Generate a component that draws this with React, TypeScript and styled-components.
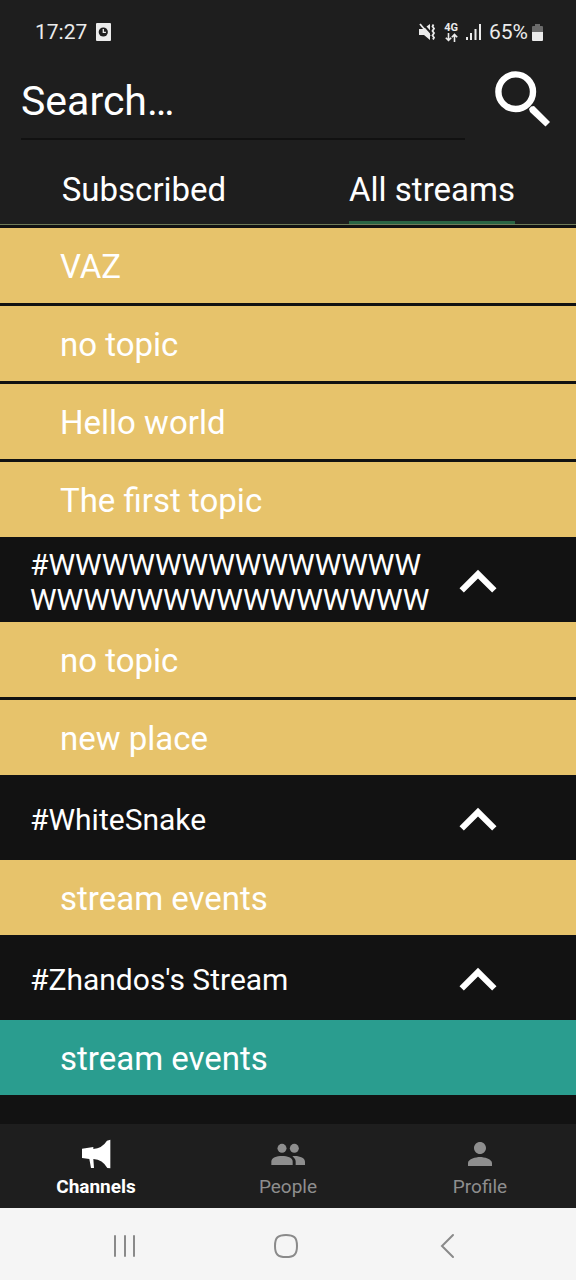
import React from "react";
import styled, { createGlobalStyle, css } from "styled-components";
import { MdKeyboardArrowUp, MdPerson } from "react-icons/md";

const GlobalStyle = createGlobalStyle`
  *, *::before, *::after { box-sizing: border-box; }
  body {
    margin: 0;
    background: #121212;
    color: #fff;
    font-family: Roboto, "Liberation Sans", sans-serif;
  }
  button, input {
    margin: 0;
    padding: 0;
    border: 0;
    border-radius: 0;
    background: none;
    color: inherit;
    font: inherit;
  }
  svg { display: block; }
`;

const Screen = styled.div`
  display: flex;
  flex-direction: column;
  min-height: 100vh;
`;

const TopPanel = styled.header`
  background: #1e1e1e;
  border-bottom: 1px solid #6f7b58;
`;

const StatusBar = styled.div`
  display: flex;
  align-items: center;
  justify-content: space-between;
  height: 64px;
  padding: 0 33px 0 35px;
  color: #ebebeb;
  font-size: 21px;
  line-height: 24px;
`;

const StatusGroup = styled.div<{ $gap: number }>`
  display: flex;
  align-items: center;
  gap: ${({ $gap }) => $gap}px;
`;

const BatteryGroup = styled.div`
  display: flex;
  align-items: center;
  gap: 4px;
`;

const NetworkBadge = styled.span`
  display: flex;
  flex-direction: column;
  align-items: center;
  font-size: 11px;
  font-weight: 700;
  line-height: 10px;
`;

const SearchRow = styled.form`
  display: flex;
  align-items: flex-start;
  gap: 30px;
  padding: 0 26px 0 21px;
`;

const SearchInput = styled.input`
  flex: 1;
  min-width: 0;
  height: 76px;
  border-bottom: 2px solid #111;
  font-size: 41px;
  line-height: 48px;
  outline: none;

  &::placeholder {
    color: #fff;
    opacity: 1;
  }
`;

const IconButton = styled.button`
  display: flex;
  flex: none;
  align-items: center;
  justify-content: center;
  cursor: pointer;
`;

const SearchButton = styled(IconButton)`
  height: 70px;
`;

const Tabs = styled.div`
  display: grid;
  grid-template-columns: 1fr 1fr;
  height: 84px;
`;

const Tab = styled.button`
  display: flex;
  justify-content: center;
  font-size: 33px;
  line-height: 40px;
  cursor: pointer;
`;

const TabLabel = styled.span<{ $active: boolean }>`
  height: 84px;
  padding-top: 30px;
  border-bottom: 3px solid ${({ $active }) => ($active ? "#2a6544" : "transparent")};
`;

const StreamList = styled.main`
  flex: 1;
  padding: 3px 0 29px;
`;

const StreamHeading = styled.h2`
  display: flex;
  align-items: center;
  min-height: 85px;
  margin: 0;
  padding: 4px 59px 0 30px;
  font-size: 30px;
  font-weight: 400;
  line-height: 35px;
`;

const StreamName = styled.span`
  flex: 1;
  min-width: 0;
  word-break: break-all;
`;

const ToggleButton = styled(IconButton)`
  width: 78px;
  height: 78px;
`;

const TopicList = styled.ul`
  display: flex;
  flex-direction: column;
  gap: 3px;
  margin: 0;
  padding: 0;
  list-style: none;
`;

const TopicButton = styled.button<{ $color: string }>`
  display: block;
  width: 100%;
  height: 75px;
  padding: 3px 60px 0;
  background: ${({ $color }) => $color};
  font-size: 33px;
  line-height: 40px;
  text-align: left;
  cursor: pointer;
`;

const BottomTabs = styled.nav`
  display: grid;
  grid-template-columns: repeat(3, 1fr);
  height: 84px;
  background: #1e1e1e;
`;

const BottomTab = styled.a<{ $active?: boolean }>`
  display: flex;
  flex-direction: column;
  align-items: center;
  gap: 4px;
  padding-top: 12px;
  color: #8e8e8e;
  font-size: 19px;
  line-height: 22px;
  text-decoration: none;

  ${({ $active }) =>
    $active &&
    css`
      color: #fff;
      font-weight: 700;
    `}
`;

const SystemBar = styled.div`
  display: flex;
  align-items: center;
  justify-content: space-between;
  height: 72px;
  padding: 4px 115px 0 111px;
  background: #f5f5f5;
  color: #8a8a8a;
`;

const AlarmIcon = () => (
  <svg width="15" height="18" viewBox="0 0 15 18" aria-hidden="true">
    <rect width="15" height="18" rx="1" fill="currentColor" />
    <circle cx="7.3" cy="9" r="4.6" fill="#1e1e1e" />
    <path d="M7.3 6v3.4h2.6" fill="none" stroke="#ebebeb" strokeWidth="1.3" />
  </svg>
);

const MuteIcon = () => (
  <svg width="17" height="18" viewBox="0 0 17 18" fill="none" stroke="currentColor" aria-hidden="true">
    <path d="M0 6h4l7-5v16l-6-5H0z" fill="currentColor" stroke="none" />
    <path d="M3 0l9 10" stroke="#1e1e1e" strokeWidth="2" />
    <path d="M1 1l10 12" strokeWidth="1.8" />
    <path d="M14.500 1.500l-1 2 1.500 2-1.500 2.500 1.500 2-1.500 2.500 1.500 2-1 2" strokeWidth="1.800" />
  </svg>
);

const DataArrowsIcon = () => (
  <svg width="13" height="9" viewBox="0 0 13 9" fill="none" stroke="currentColor" strokeWidth="1.6" aria-hidden="true">
    <path d="M3.500 0v7M.8 4.700l2.700 2.700 2.700-2.700M9.500 9V1.500M6.800 4.200l2.700-2.700 2.700 2.700" />
  </svg>
);

const SignalIcon = () => (
  <svg width="15" height="16" viewBox="0 0 15 16" fill="currentColor" aria-hidden="true">
    <path d="M0 13h2v3H0zM4 9h2v7H4zM8.500 5h2v11h-2zM13 0h2v16h-2z" />
  </svg>
);

const BatteryIcon = () => (
  <svg width="11" height="17" viewBox="0 0 11 17" aria-hidden="true">
    <path d="M3 0h5v2h2q1 0 1 1v5H0V3q0-1 1-1h2z" fill="#6b6b6b" />
    <path d="M0 8h11v8q0 1-1 1H1q-1 0-1-1z" fill="#ebebeb" />
  </svg>
);

const SearchIcon = () => (
  <svg width="55" height="56" viewBox="0 0 55 56" fill="none" aria-hidden="true">
    <circle cx="20.700" cy="20.700" r="17.300" stroke="#fff" strokeWidth="6.400" />
    <path d="M34 38l2-2.500 3-.500L55 51l-4.500 4.500L35 41z" fill="#fff" />
  </svg>
);

const MegaphoneIcon = () => (
  <svg width="36" height="36" viewBox="6 6 108 108" fill="currentColor" aria-hidden="true">
    <path d="M18 44L52 39V45Q78 43 93 20L103 17V103L94 102Q80 77 52 75L54 102H45L40 75L18 72Z" />
  </svg>
);

const PeopleIcon = () => (
  <svg width="36" height="36" viewBox="18 6 108 108" fill="currentColor" aria-hidden="true">
    <circle cx="54" cy="43" r="13.500" />
    <circle cx="91" cy="43" r="13.500" />
    <path d="M22 93V83C22 71 38 66 54 66S86 71 86 83V93Z" />
    <path d="M85 66.500C104 64 123 71 123 83V93H95V83C95 76 91 71 85 66.500Z" />
  </svg>
);

const RecentsIcon = () => (
  <svg width="28" height="28" viewBox="0 0 28 28" stroke="currentColor" strokeWidth="2" strokeLinecap="round" aria-hidden="true">
    <path d="M4 4v20M14 4v20M23 4v20" />
  </svg>
);

const HomeIcon = () => (
  <svg width="28" height="28" viewBox="0 0 28 28" fill="none" stroke="currentColor" strokeWidth="2" aria-hidden="true">
    <path d="M14 3C22 3 25 5.500 25 14S22 25 14 25 3 22.500 3 14 6 3 14 3Z" />
  </svg>
);

const BackIcon = () => (
  <svg width="28" height="28" viewBox="0 0 28 28" fill="none" stroke="currentColor" strokeWidth="2" strokeLinecap="round" aria-hidden="true">
    <path d="M20 3L9 14l11 11" />
  </svg>
);

const GOLD = "#e7c36b";
const TEAL = "#2a9d8f";

type Stream = { name?: string; color: string; topics: string[] };

const streams: Stream[] = [
  { color: GOLD, topics: ["VAZ", "no topic", "Hello world", "The first topic"] },
  { name: "#" + "W".repeat(29), color: GOLD, topics: ["no topic", "new place"] },
  { name: "#WhiteSnake", color: GOLD, topics: ["stream events"] },
  { name: "#Zhandos's Stream", color: TEAL, topics: ["stream events"] },
];

const StreamSection = ({ name, color, topics }: Stream) => (
  <section>
    {name && (
      <StreamHeading>
        <StreamName>{name}</StreamName>
        <ToggleButton type="button" aria-label="Collapse stream" aria-expanded="true">
          <MdKeyboardArrowUp size={74} />
        </ToggleButton>
      </StreamHeading>
    )}
    <TopicList>
      {topics.map((topic) => (
        <li key={topic}>
          <TopicButton type="button" $color={color}>
            {topic}
          </TopicButton>
        </li>
      ))}
    </TopicList>
  </section>
);

export default function App() {
  return (
    <Screen>
      <GlobalStyle />
      <TopPanel>
        <StatusBar>
          <StatusGroup $gap={9}>
            <span>17:27</span>
            <AlarmIcon />
          </StatusGroup>
          <StatusGroup $gap={8}>
            <MuteIcon />
            <NetworkBadge>
              4G
              <DataArrowsIcon />
            </NetworkBadge>
            <SignalIcon />
            <BatteryGroup>
              <span>65%</span>
              <BatteryIcon />
            </BatteryGroup>
          </StatusGroup>
        </StatusBar>
        <SearchRow role="search" onSubmit={(e: React.FormEvent) => e.preventDefault()}>
          <SearchInput type="text" placeholder="Search…" aria-label="Search streams" />
          <SearchButton type="submit" aria-label="Search">
            <SearchIcon />
          </SearchButton>
        </SearchRow>
        <Tabs role="tablist">
          <Tab type="button" role="tab" aria-selected="false">
            <TabLabel $active={false}>Subscribed</TabLabel>
          </Tab>
          <Tab type="button" role="tab" aria-selected="true">
            <TabLabel $active>All streams</TabLabel>
          </Tab>
        </Tabs>
      </TopPanel>
      <StreamList>
        {streams.map((stream, index) => (
          <StreamSection key={index} {...stream} />
        ))}
      </StreamList>
      <BottomTabs>
        <BottomTab href="#channels" $active aria-current="page">
          <MegaphoneIcon />
          Channels
        </BottomTab>
        <BottomTab href="#people">
          <PeopleIcon />
          People
        </BottomTab>
        <BottomTab href="#profile">
          <MdPerson size={36} />
          Profile
        </BottomTab>
      </BottomTabs>
      <SystemBar>
        <IconButton type="button" aria-label="Recent apps">
          <RecentsIcon />
        </IconButton>
        <IconButton type="button" aria-label="Home">
          <HomeIcon />
        </IconButton>
        <IconButton type="button" aria-label="Back">
          <BackIcon />
        </IconButton>
      </SystemBar>
    </Screen>
  );
}
